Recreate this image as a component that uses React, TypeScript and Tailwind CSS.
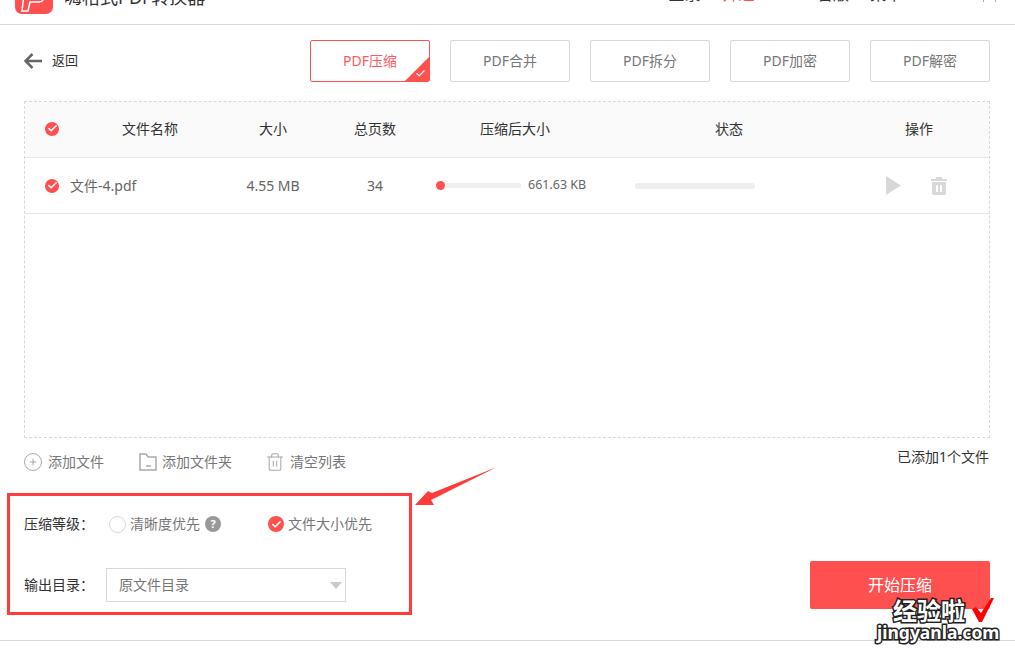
import { Check, Plus, Trash2 } from 'lucide-react';

const FONT = "font-['Noto_Sans','Noto_Sans_CJK_SC',sans-serif]";
const TABS = ['PDF压缩', 'PDF合并', 'PDF拆分', 'PDF加密', 'PDF解密'];
const WATERMARK = "font-bold text-white [-webkit-text-stroke:3px_#222] [paint-order:stroke_fill]";

function RedCheck({ size = 'w-[14px] h-[14px]' }: { size?: string }) {
  return (
    <span className={`flex ${size} items-center justify-center rounded-full bg-[#ff5050] text-white`}>
      <Check className="h-[11px] w-[11px]" strokeWidth={3.5} />
    </span>
  );
}

function TabButton({ label, active }: { label: string; active?: boolean }) {
  if (active) {
    return (
      <div className="relative flex h-[42px] w-[120px] items-center justify-center overflow-hidden rounded-[2px] border border-[#ff5050] text-sm text-[#ff5a5f]">
        {label}
        <span className="absolute bottom-0 right-0 h-0 w-0 border-b-[24px] border-l-[24px] border-b-[#ff5050] border-l-transparent" />
        <Check className="absolute bottom-[2px] right-[3px] h-[11px] w-[11px] text-white" strokeWidth={2.5} />
      </div>
    );
  }
  return (
    <div className="flex h-[42px] w-[120px] items-center justify-center rounded-[2px] border border-[#d8d8d8] text-sm text-[#777]">
      {label}
    </div>
  );
}

export default function App() {
  return (
    <div className={`${FONT} relative h-[650px] w-[1015px] overflow-hidden bg-white`}>
      <header className="flex h-[25px] items-end border-b border-[#d8d8d8]">
        <div className="mb-[10px] ml-[15px] h-[24px] w-[38px] overflow-hidden rounded-b-[7px] bg-[#ff5050]">
          <svg viewBox="0 0 38 24" className="h-[24px] w-[38px] fill-none stroke-white" strokeWidth={1.5}>
            <path d="M10 -4 L7 21 L13 21 L15 12 L24 12 C30 12 32 2 28 -4" />
          </svg>
        </div>
        <div className="mb-[15px] ml-[11px] text-lg leading-[24px] text-[#333]">嗨格式PDF转换器</div>
        <nav className="mb-[18px] flex text-base leading-6 text-[#333]">
          <span className="ml-[463px]">登录</span>
          <span className="ml-[22px] text-[#ff5050]">开通VIP</span>
          <span className="ml-[38px]">官版</span>
          <span className="ml-[21px]">菜单</span>
        </nav>
        <svg viewBox="0 0 14 2" className="absolute left-[983px] top-0 h-[2px] w-[14px] stroke-[#aaa]">
          <path d="M0.5 0 V2 M12.5 0 V2" />
        </svg>
      </header>

      <div className="mt-[15px] flex items-center pl-[24px]">
        <svg viewBox="0 0 18 16" className="h-[16px] w-[18px] fill-none stroke-[#666]" strokeWidth={2.5}>
          <path d="M8.5 1 L1.5 8 L8.5 15 M2 8 H18" />
        </svg>
        <span className="ml-[10px] text-[13px] text-[#333]">返回</span>
        <div className="ml-[232px] flex gap-[20px]">
          {TABS.map((t, i) => (
            <TabButton key={t} label={t} active={i === 0} />
          ))}
        </div>
      </div>

      <div className="ml-[24px] mt-[19px] h-[337px] w-[966px] border border-dashed border-[#d8d8d8]">
        <div className="flex h-[56px] items-center border-b border-[#e8e8e8] bg-[#fafafa] pb-[2px] text-sm text-[#333]">
          <span className="ml-[20px]"><RedCheck /></span>
          <span className="ml-[63px] w-[56px] text-center">文件名称</span>
          <span className="ml-[81px] w-[28px] text-center">大小</span>
          <span className="ml-[67px] w-[42px] text-center">总页数</span>
          <span className="ml-[84px] w-[70px] text-center">压缩后大小</span>
          <span className="ml-[165px] w-[28px] text-center">状态</span>
          <span className="ml-[162px] w-[28px] text-center">操作</span>
        </div>
        <div className="flex h-[56px] items-center border-b border-[#e8e8e8] text-[#666]">
          <span className="ml-[20px]"><RedCheck /></span>
          <span className="ml-[11px] w-[150px] text-sm">文件-4.pdf</span>
          <span className="ml-[18px] w-[70px] text-center text-sm">4.55 MB</span>
          <span className="ml-[47px] w-[40px] text-center text-sm">34</span>
          <span className="relative ml-[41px] h-[5px] w-[85px] rounded-full bg-[#eee]">
            <span className="absolute left-0 top-[-2px] h-[9px] w-[9px] rounded-full bg-[#ff5050]" />
          </span>
          <span className="ml-[7px] w-[100px] text-[12.5px]">661.63 KB</span>
          <span className="ml-[7px] h-[6px] w-[120px] rounded-full bg-[#eee]" />
          <svg viewBox="0 0 14 18" className="ml-[131px] h-[19px] w-[15px] fill-[#d8d8d8]">
            <path d="M0 0 L14 9 L0 18 Z" />
          </svg>
          <svg viewBox="0 0 16 18" className="ml-[30px] h-[18px] w-[16px] fill-[#d8d8d8]">
            <path d="M5 0h6v2h5v2H0V2h5zM1 5h14v11a2 2 0 0 1-2 2H3a2 2 0 0 1-2-2zm4 3v7h2V8zm4 0v7h2V8z" />
          </svg>
        </div>
      </div>

      <div className="mt-[9px] flex items-center pl-[24px] text-sm text-[#777]">
        <span className="flex h-[18px] w-[18px] items-center justify-center rounded-full border border-[#aaa]">
          <Plus className="h-[10px] w-[10px] text-[#999]" />
        </span>
        <span className="ml-[6px]">添加文件</span>
        <svg viewBox="0 0 18 18" className="ml-[35px] h-[18px] w-[18px] fill-none stroke-[#aaa]" strokeWidth={1.5}>
          <path d="M1 1h6l2 3h8v13H1z M7 13h5" />
        </svg>
        <span className="ml-[5px]">添加文件夹</span>
        <Trash2 className="ml-[33px] h-[20px] w-[20px] text-[#aaa]" strokeWidth={1.25} />
        <span className="ml-[5px]">清空列表</span>
        <span className="mb-[10px] ml-[551px] text-[#333]">已添加1个文件</span>
      </div>

      <div className="mt-[16px] flex items-end pl-[7px]">
        <div className="h-[122px] w-[405px] border-[3px] border-[#ff3b3b] pl-[14px]">
          <div className="mt-[16px] flex h-[24px] items-center text-sm text-[#777]">
            <span className="w-[85px] text-[#333]">压缩等级：</span>
            <span className="h-[17px] w-[17px] rounded-full border border-[#d8d8d8]" />
            <span className="ml-[4px]">清晰度优先</span>
            <span className="ml-[5px] flex h-[16px] w-[16px] items-center justify-center rounded-full bg-[#999] text-[11px] font-bold text-white">?</span>
            <span className="ml-[47px]"><RedCheck size="w-[16px] h-[16px]" /></span>
            <span className="ml-[4px]">文件大小优先</span>
          </div>
          <div className="mt-[32px] flex items-center">
            <span className="w-[82px] text-sm text-[#333]">输出目录：</span>
            <div className="flex h-[34px] w-[240px] items-center justify-between border border-[#d8d8d8] pl-[12px] pr-[3px] text-sm text-[#777]">
              原文件目录
              <span className="h-0 w-0 border-x-[6px] border-t-[7px] border-x-transparent border-t-[#ccc]" />
            </div>
          </div>
        </div>
        <button className="mb-[6px] ml-[398px] h-[48px] w-[180px] rounded-[2px] bg-[#ff5050] text-base text-white">开始压缩</button>
      </div>

      <div className="absolute inset-x-0 top-[640px] border-t border-[#d8d8d8]" />

      {/* annotation arrow */}
      <svg viewBox="0 0 90 40" className="absolute left-[414px] top-[466px] h-[40px] w-[90px] fill-[#ff3b3b]">
        <path d="M83 1 L18 27 L14 25 L1 39 L20 39 L17 34 Z" />
      </svg>

      {/* watermark */}
      <span className={`absolute left-[893px] top-[596px] text-2xl leading-[30px] ${WATERMARK}`}>经验啦</span>
      <svg viewBox="0 0 22 24" className="absolute left-[972px] top-[598px] h-[24px] w-[22px] fill-[#f00]">
        <path d="M0 11 L4 9 L9 15 L19 0 L22 0 L10 24 L7 24 Z" />
      </svg>
      <span className={`absolute left-[877px] top-[620px] text-[17.5px] leading-[24px] ${WATERMARK}`}>jingyanla.com</span>
    </div>
  );
}
